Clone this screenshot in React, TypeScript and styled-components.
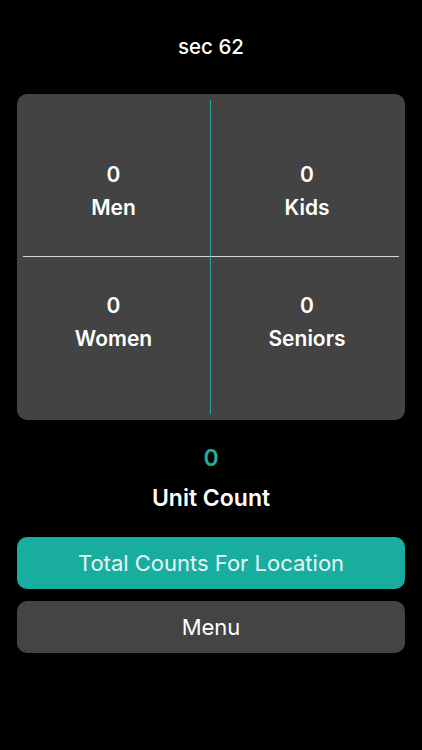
import styled, { createGlobalStyle } from "styled-components";

const GlobalStyle = createGlobalStyle`
  html, body {
    margin: 0;
    padding: 0;
    background: #000;
  }
  body {
    font-family: Inter, "Noto Sans", "Liberation Sans", sans-serif;
    color: #fff;
  }
`;

const Screen = styled.div`
  width: 422px;
  height: 750px;
  background: #000;
  display: flex;
  flex-direction: column;
  align-items: stretch;
  padding: 0 17px;
  box-sizing: border-box;
`;

const Timer = styled.div`
  margin-top: 35px;
  height: 24px;
  line-height: 24px;
  text-align: center;
  font-size: 20.5px;
  font-weight: 500;
`;

const Panel = styled.div`
  margin-top: 35px;
  height: 326px;
  background: #434343;
  border-radius: 10px;
  padding: 6px;
  box-sizing: border-box;
  display: grid;
  grid-template-columns: 1fr 1fr;
  grid-template-rows: 1fr 1fr;
`;

const Cell = styled.button<{ $top: boolean; $left: boolean }>`
  background: transparent;
  border: none;
  border-right: ${(p) => (p.$left ? "1.5px solid #2aa596" : "none")};
  border-bottom: ${(p) => (p.$top ? "1.5px solid #d6d6d6" : "none")};
  color: #fff;
  font-family: inherit;
  display: flex;
  flex-direction: column;
  align-items: center;
  justify-content: flex-start;
  padding: ${(p) => (p.$top ? "63px" : "37px")} ${(p) => (p.$left ? "6px" : "0")} 0
    ${(p) => (p.$left ? "0" : "4px")};
  gap: 8px;
  cursor: pointer;
`;

const CellValue = styled.span`
  font-size: 21px;
  font-weight: 600;
  line-height: 24px;
`;

const CellLabel = styled.span`
  font-size: 21px;
  font-weight: 600;
  line-height: 26px;
`;

const UnitValue = styled.div`
  margin-top: 24px;
  text-align: center;
  color: #22ad9f;
  font-size: 23px;
  font-weight: 600;
  line-height: 28px;
`;

const UnitLabel = styled.div`
  margin-top: 12px;
  text-align: center;
  font-size: 23px;
  font-weight: 600;
  line-height: 28px;
`;

const ActionButton = styled.button<{ $primary?: boolean }>`
  height: 52px;
  border: none;
  border-radius: 10px;
  background: ${(p) => (p.$primary ? "#19ada0" : "#444444")};
  color: ${(p) => (p.$primary ? "#e6f7f5" : "#ffffff")};
  font-family: inherit;
  font-size: 22px;
  font-weight: 400;
  cursor: pointer;
`;

const Actions = styled.div`
  margin-top: 25px;
  display: flex;
  flex-direction: column;
  gap: 12px;
`;

const groups = [
  { label: "Men", count: 0 },
  { label: "Kids", count: 0 },
  { label: "Women", count: 0 },
  { label: "Seniors", count: 0 },
];

export default function App() {
  return (
    <>
      <GlobalStyle />
      <Screen>
        <Timer>sec 62</Timer>
        <Panel>
          {groups.map((g, i) => (
            <Cell key={g.label} $top={i < 2} $left={i % 2 === 0}>
              <CellValue>{g.count}</CellValue>
              <CellLabel>{g.label}</CellLabel>
            </Cell>
          ))}
        </Panel>
        <UnitValue>0</UnitValue>
        <UnitLabel>Unit Count</UnitLabel>
        <Actions>
          <ActionButton $primary>Total Counts For Location</ActionButton>
          <ActionButton>Menu</ActionButton>
        </Actions>
      </Screen>
    </>
  );
}
